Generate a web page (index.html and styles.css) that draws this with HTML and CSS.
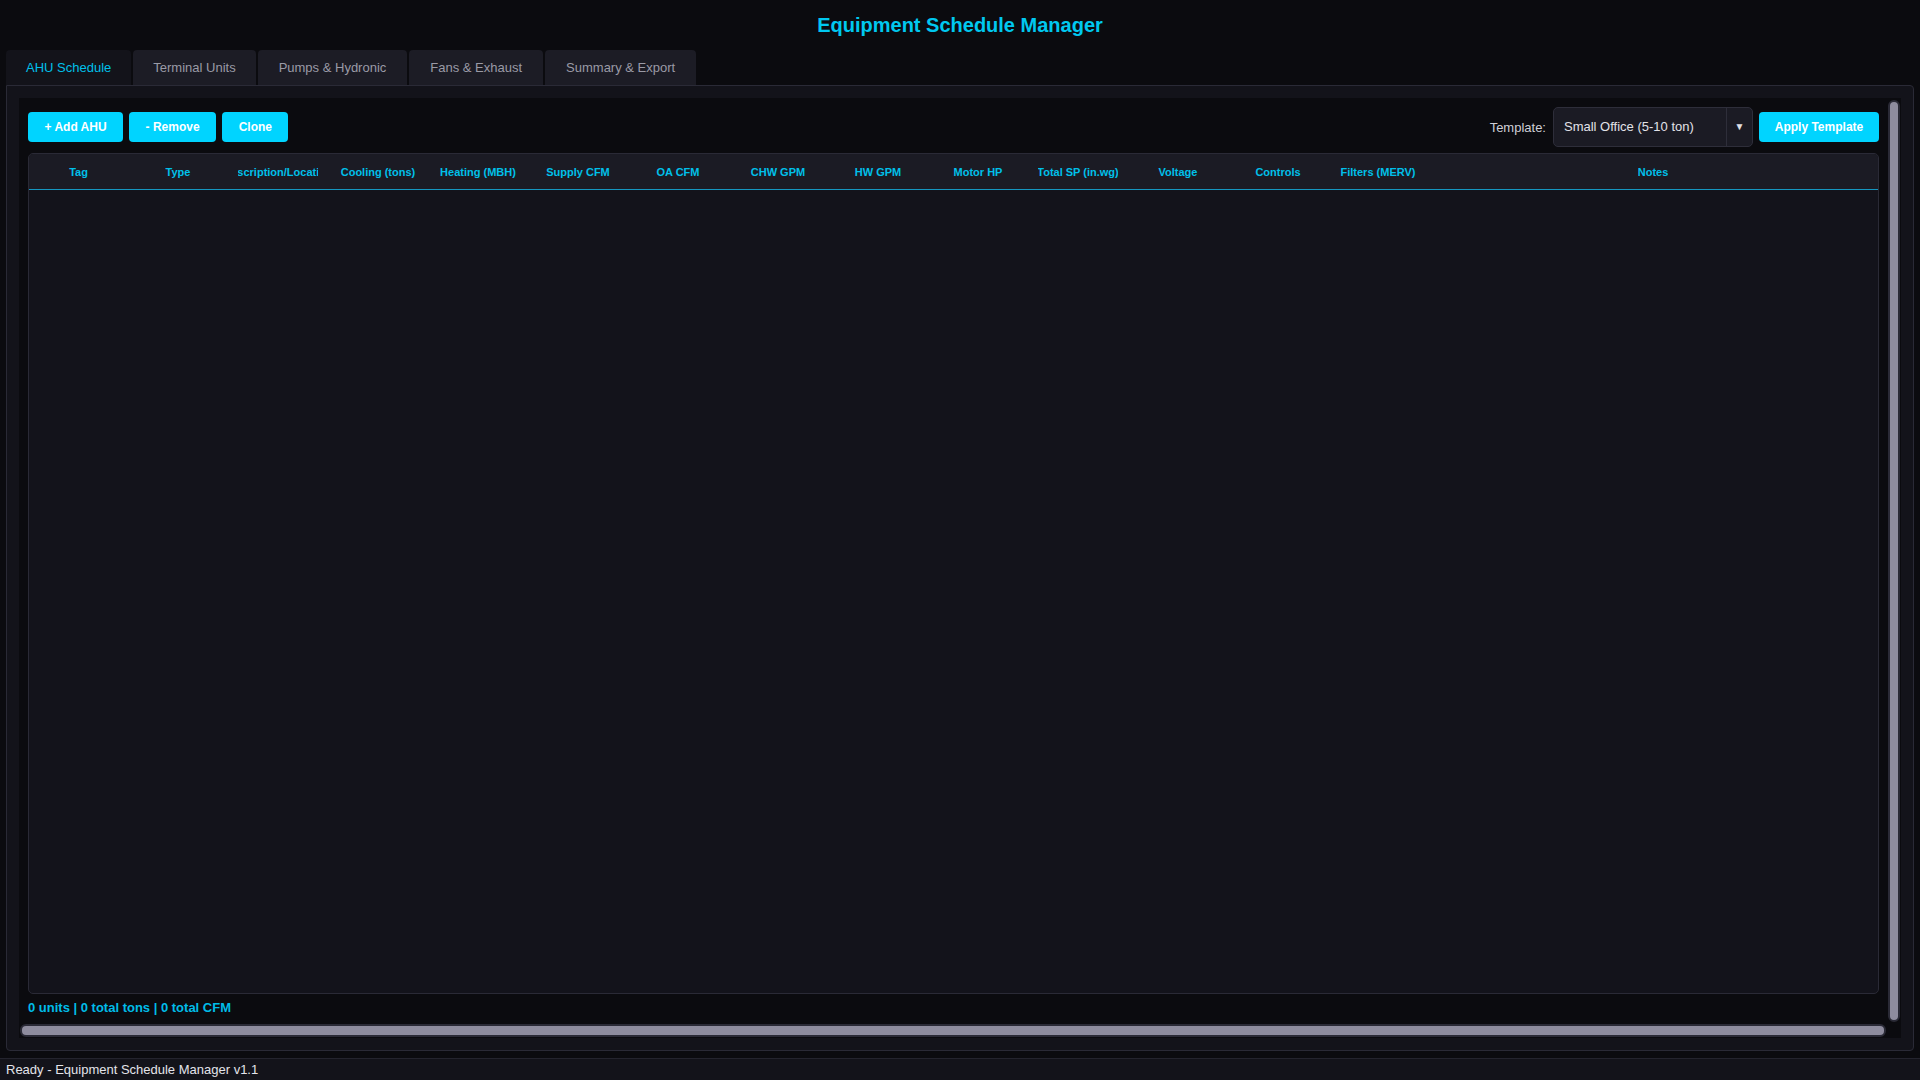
FILE: index.html
```html
<!DOCTYPE html>
<html lang="en">

    <head>
        <meta charset="UTF-8">
        <title>Equipment Schedule Manager</title>
        <link rel="stylesheet" href="styles.css">
    </head>

    <body>
        <h1 class="title">Equipment Schedule Manager</h1>

        <ul class="tabs">
            <li class="tab active">AHU Schedule</li>
            <li class="tab">Terminal Units</li>
            <li class="tab wide">Pumps &amp; Hydronic</li>
            <li class="tab wide">Fans &amp; Exhaust</li>
            <li class="tab wide">Summary &amp; Export</li>
        </ul>

        <div class="panel">
            <div class="frame">
                <div class="content">
                    <div class="toolbar">
                        <div class="group">
                            <button class="btn">+ Add AHU</button>
                            <button class="btn">- Remove</button>
                            <button class="btn">Clone</button>
                        </div>
                        <div class="group">
                            <span class="label">Template:</span>
                            <div class="combo">
                                <span class="combo-text">Small Office (5-10 ton)</span>
                                <span class="combo-arrow">&#9660;</span>
                            </div>
                            <button class="btn btn-apply">Apply Template</button>
                        </div>
                    </div>

                    <div class="table">
                        <div class="thead">
                            <div class="th"><span>Tag</span></div>
                            <div class="th"><span>Type</span></div>
                            <div class="th"><span>Description/Location</span></div>
                            <div class="th"><span>Cooling (tons)</span></div>
                            <div class="th"><span>Heating (MBH)</span></div>
                            <div class="th"><span>Supply CFM</span></div>
                            <div class="th"><span>OA CFM</span></div>
                            <div class="th"><span>CHW GPM</span></div>
                            <div class="th"><span>HW GPM</span></div>
                            <div class="th"><span>Motor HP</span></div>
                            <div class="th"><span>Total SP (in.wg)</span></div>
                            <div class="th"><span>Voltage</span></div>
                            <div class="th"><span>Controls</span></div>
                            <div class="th"><span>Filters (MERV)</span></div>
                            <div class="th th-notes"><span>Notes</span></div>
                        </div>
                        <div class="tbody"></div>
                    </div>

                    <p class="totals">0 units | 0 total tons | 0 total CFM</p>
                </div>
                <div class="vscroll"><div class="thumb"></div></div>
                <div class="hscroll"><div class="thumb"></div></div>
                <div class="corner"></div>
            </div>
        </div>

        <div class="statusbar">Ready - Equipment Schedule Manager v1.1</div>
    </body>

</html>
```

FILE: styles.css
```css
* {
    margin: 0;
    padding: 0;
    list-style: none;
    box-sizing: border-box;
}

body {
    height: 100vh;
    display: flex;
    flex-direction: column;
    background: #0b0b0f;
    font-family: "Liberation Sans", Arial, sans-serif;
    color: #dcdce2;
    overflow: hidden;
}

.title {
    height: 50px;
    line-height: 50px;
    text-align: center;
    font-size: 20px;
    font-weight: bold;
    color: #00c8f0;
}

/* tabs */
.tabs {
    height: 35px;
    display: flex;
    gap: 2px;
    padding-left: 6px;
}

.tab {
    padding: 0 20px;
    line-height: 35px;
    font-size: 13px;
    color: #9a9aa6;
    background: #1c1c25;
    border-radius: 4px 4px 0 0;
}

.tab.wide {
    padding: 0 21px;
}

.tab.active {
    color: #00c0ea;
    background: #13131a;
}

/* panel */
.panel {
    flex: 1;
    margin: 0 6px 7px 6px;
    padding: 12px;
    background: #13131a;
    border: 1px solid #2a2a36;
    border-radius: 0 4px 4px 4px;
    display: flex;
}

.frame {
    flex: 1;
    background: #0b0b0f;
    display: grid;
    grid-template-columns: 1fr 14px;
    grid-template-rows: 1fr 14px;
}

.content {
    display: flex;
    flex-direction: column;
    padding: 9px 8px 8px 9px;
    min-height: 0;
}

.toolbar {
    height: 40px;
    display: flex;
    justify-content: space-between;
    align-items: center;
}

.group {
    display: flex;
    align-items: center;
    gap: 6px;
}

.btn {
    height: 30px;
    padding: 0 16.5px;
    border: none;
    border-radius: 4px;
    background: #00d4ff;
    color: #fff;
    font-family: "Liberation Sans", Arial, sans-serif;
    font-size: 12px;
    font-weight: bold;
}

.btn-apply {
    width: 120px;
    padding: 0;
}

.label {
    font-size: 13px;
    color: #cfcfd6;
    margin-right: 1px;
}

.combo {
    width: 200px;
    height: 40px;
    display: flex;
    background: #1b1b24;
    border: 1px solid #2e2e3a;
    border-radius: 5px;
}

.combo-text {
    flex: 1;
    padding-left: 10px;
    line-height: 38px;
    font-size: 13px;
    color: #e2e2e8;
}

.combo-arrow {
    width: 26px;
    border-left: 1px solid #2e2e3a;
    text-align: center;
    line-height: 38px;
    font-size: 10px;
    color: #e0e0e6;
}

/* table */
.table {
    flex: 1;
    margin-top: 6px;
    display: flex;
    flex-direction: column;
    border: 1px solid #2a2a36;
    border-radius: 5px;
    background: #13131b;
    overflow: hidden;
}

.thead {
    height: 36px;
    display: flex;
    background: #1b1b24;
    border-bottom: 1px solid #1596bf;
}

.th {
    width: 100px;
    flex: none;
    display: flex;
    justify-content: center;
    align-items: center;
}

.th span {
    width: 80px;
    display: flex;
    justify-content: center;
    overflow: hidden;
    white-space: nowrap;
    font-size: 11px;
    font-weight: bold;
    color: #00c0ea;
}

.th:first-child {
    width: 99px;
}

.th-notes {
    flex: 1;
}

.th-notes span {
    width: auto;
}

.tbody {
    flex: 1;
}

.totals {
    margin-top: 6px;
    line-height: 16px;
    font-size: 13px;
    font-weight: bold;
    color: #00bce8;
}

/* scrollbars */
.vscroll {
    padding: 2px 1px;
}

.hscroll {
    padding: 0 1px 1px 1px;
}

.thumb {
    width: 100%;
    height: 100%;
    background: #8e8c9e;
    border: 2px solid #2a2a36;
    border-radius: 6px;
}

.hscroll .thumb {
    height: 13px;
}

.statusbar {
    height: 22px;
    line-height: 21px;
    padding-left: 6px;
    font-size: 13px;
    color: #e4e4ea;
    background: #13131a;
    border-top: 1px solid #24242e;
}
```
